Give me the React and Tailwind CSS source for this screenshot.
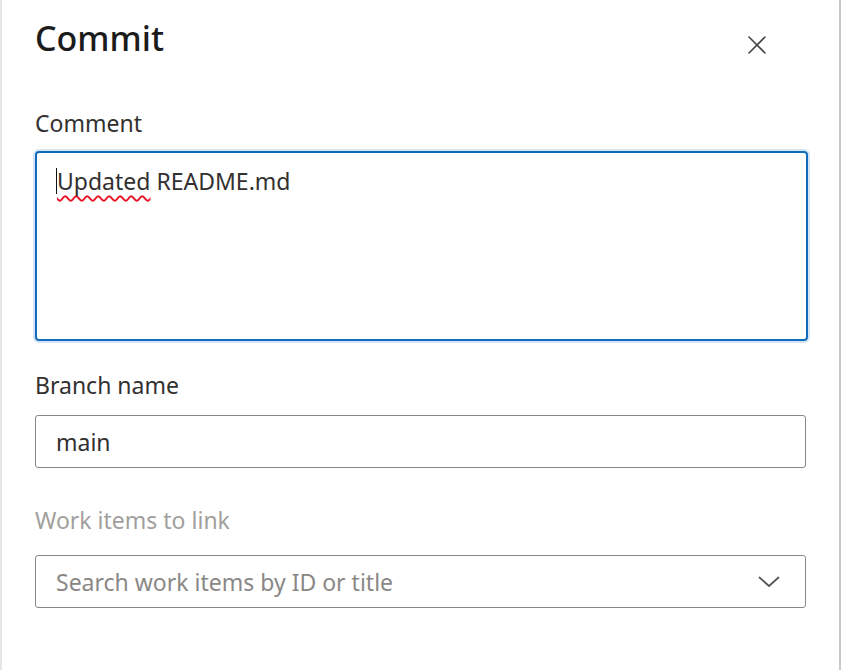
import React from 'react';

const font = { fontFamily: '"Noto Sans", "Open Sans", sans-serif' };

function CloseIcon() {
  return (
    <svg width="20" height="20" viewBox="0 0 20 20" fill="none" stroke="#444" strokeWidth="1.6" strokeLinecap="round">
      <path d="M2 2 L18 18 M18 2 L2 18" />
    </svg>
  );
}

function Chevron() {
  return (
    <svg width="22" height="12" viewBox="0 0 22 12" fill="none" stroke="#555" strokeWidth="1.7" strokeLinecap="round" strokeLinejoin="round">
      <path d="M1.5 1.5 L11 10 L20.5 1.5" />
    </svg>
  );
}

export default function App() {
  return (
    <div className="h-[670px] w-[842px] bg-white" style={font}>
      <div className="flex h-full w-[841px] flex-col border-l-2 border-r-2 border-l-[#e6e6e6] border-r-[#c8c8c8] pl-[33px] pr-[32px]">
        <div className="flex items-start justify-between pt-[18px]">
          <h1 className="text-[34px] font-medium leading-[40px] text-[#1b1b1b]">Commit</h1>
          <button type="button" className="mr-[40px] mt-[17px]" aria-label="Close">
            <CloseIcon />
          </button>
        </div>

        <label className="mt-[51px] block text-[23px] leading-[28px] text-[#323130]">Comment</label>
        <div className="mt-[14px] h-[190px] w-[773px] rounded-[4px] border-2 border-[#0f6cbd] shadow-[0_0_0_2px_rgba(15,108,189,0.18)] px-[20px] pt-[14px]">
          <p className="relative text-[23px] leading-[28px] text-[#323130]">
            <span className="absolute left-[-1px] top-[1px] h-[26px] w-px bg-[#111]" />
            <span className="underline decoration-wavy decoration-[#e81123] decoration-[1.5px] underline-offset-[5px] [text-decoration-skip-ink:none]">Updated</span> README.md
          </p>
        </div>

        <label className="mt-[30px] block text-[23px] leading-[28px] text-[#323130]">Branch name</label>
        <div className="mt-[16px] flex h-[53px] w-[771px] items-center rounded-[3px] border border-[#8a8886] px-[20px]">
          <span className="text-[23px] leading-[28px] text-[#323130]">main</span>
        </div>

        <label className="mt-[38px] block text-[23px] leading-[28px] text-[#a19f9d]">Work items to link</label>
        <div className="mt-[21px] flex h-[53px] w-[771px] items-center justify-between rounded-[3px] border border-[#8a8886] pl-[20px] pr-[25px]">
          <span className="text-[23px] leading-[28px] text-[#8a8886]">Search work items by ID or title</span>
          <Chevron />
        </div>
      </div>
    </div>
  );
}
